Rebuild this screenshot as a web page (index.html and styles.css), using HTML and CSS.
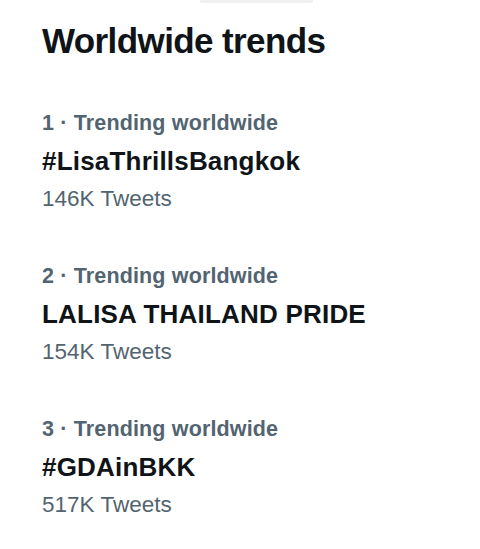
FILE: index.html
```html
<!DOCTYPE html>
<html lang="en">
<head>
<meta charset="utf-8">
<link rel="stylesheet" href="styles.css">
</head>
<body>
<div class="sheet">
  <div class="handle"></div>
  <h1 class="title">Worldwide trends</h1>
  <ul class="trends">
    <li class="trend">
      <div class="meta">1 · Trending worldwide</div>
      <div class="name">#LisaThrillsBangkok</div>
      <div class="count">146K Tweets</div>
    </li>
    <li class="trend">
      <div class="meta">2 · Trending worldwide</div>
      <div class="name">LALISA THAILAND PRIDE</div>
      <div class="count">154K Tweets</div>
    </li>
    <li class="trend">
      <div class="meta">3 · Trending worldwide</div>
      <div class="name">#GDAinBKK</div>
      <div class="count">517K Tweets</div>
    </li>
  </ul>
</div>
</body>
</html>
```
FILE: styles.css
```css
html, body {
  margin: 0;
  padding: 0;
  background: #ffffff;
}
.sheet {
  width: 480px;
  height: 549px;
  position: relative;
  font-family: "Liberation Sans", Arial, sans-serif;
  color: #0f1419;
  padding-left: 42px;
  box-sizing: border-box;
  overflow: hidden;
}
.handle {
  position: absolute;
  top: 0;
  left: 200px;
  width: 113px;
  height: 3px;
  background: #eef0f2;
  border-radius: 0 0 2px 2px;
}
.title {
  margin: 0;
  padding-top: 21px;
  font-size: 35px;
  line-height: 40px;
  font-weight: 700;
  letter-spacing: -0.6px;
}
.trends {
  list-style: none;
  margin: 0;
  padding: 0;
  padding-top: 50px;
  display: flex;
  flex-direction: column;
  gap: 52px;
}
.trend {
  display: flex;
  flex-direction: column;
}
.meta {
  font-size: 21.5px;
  line-height: 24px;
  font-weight: 700;
  letter-spacing: 0.15px;
  color: #536471;
}
.name {
  margin-top: 11px;
  font-size: 26px;
  line-height: 30px;
  font-weight: 700;
  letter-spacing: 0.2px;
  color: #0f1419;
}
.count {
  margin-top: 10px;
  font-size: 22.5px;
  line-height: 26px;
  color: #536471;
}
```
